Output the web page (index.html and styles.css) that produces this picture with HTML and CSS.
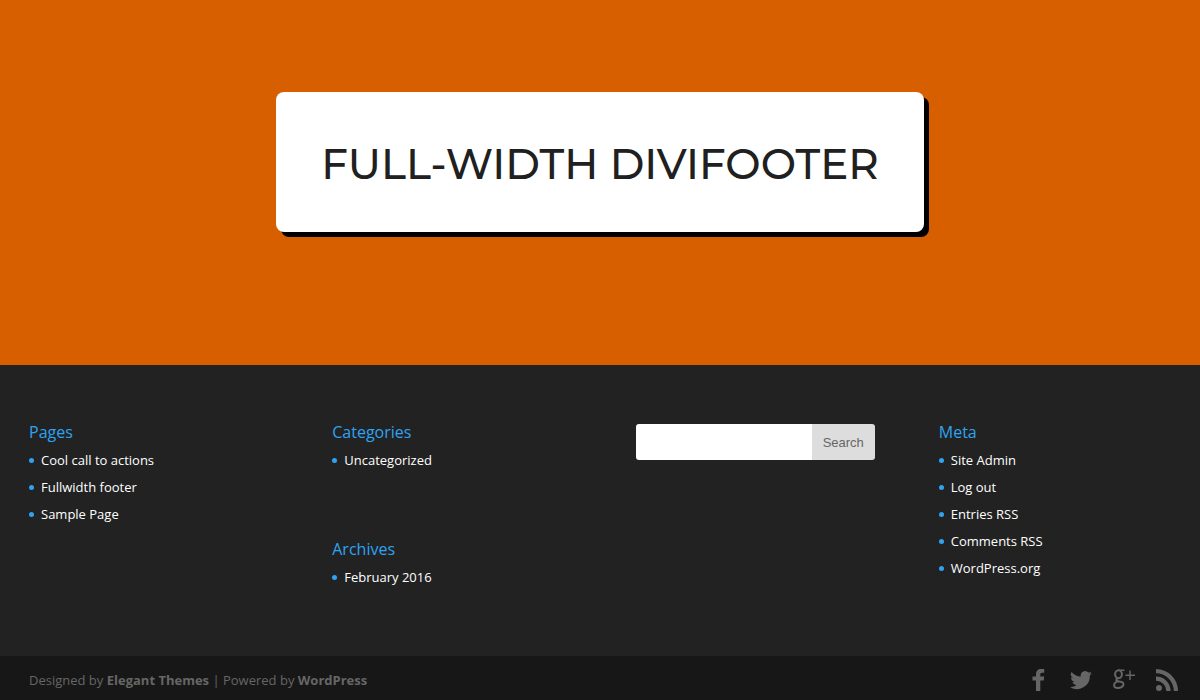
FILE: index.html
```html
<!DOCTYPE html>
<html lang="en">
  <head>
    <meta charset="UTF-8" />
    <meta name="viewport" content="width=device-width, initial-scale=1.0" />
    <title>Full-width Divifooter</title>
    <link rel="stylesheet" href="styles.css">
  </head>
  <body>
    <main class="hero">
      <h1 class="hero-title">FULL-WIDTH DIVIFOOTER</h1>
    </main>
    <footer class="footer">
      <div class="widgets">
        <section class="column">
          <div class="widget">
            <h4>Pages</h4>
            <ul>
              <li><a href="#">Cool call to actions</a></li>
              <li><a href="#">Fullwidth footer</a></li>
              <li><a href="#">Sample Page</a></li>
            </ul>
          </div>
        </section>
        <section class="column">
          <div class="widget">
            <h4>Categories</h4>
            <ul>
              <li><a href="#">Uncategorized</a></li>
            </ul>
          </div>
          <div class="widget">
            <h4>Archives</h4>
            <ul>
              <li><a href="#">February 2016</a></li>
            </ul>
          </div>
        </section>
        <section class="column">
          <form class="search" role="search">
            <input class="search-field" type="text" name="s" aria-label="Search for" />
            <button class="search-button" type="submit">Search</button>
          </form>
        </section>
        <section class="column">
          <div class="widget">
            <h4>Meta</h4>
            <ul>
              <li><a href="#">Site Admin</a></li>
              <li><a href="#">Log out</a></li>
              <li><a href="#">Entries RSS</a></li>
              <li><a href="#">Comments RSS</a></li>
              <li><a href="#">WordPress.org</a></li>
            </ul>
          </div>
        </section>
      </div>

      <div class="bottom">
        <p class="info">Designed by <a href="#">Elegant Themes</a> | Powered by <a href="#">WordPress</a></p>
        <nav class="social">
          <a href="#" aria-label="Facebook">
            <svg viewBox="0 0 22 22"><path d="M9 22V11.500H5.500V7.500H9V5.500C9 2 10.800 0 14.200 0h3v3.800h-2c-1.500 0-1.900.7-1.900 2v1.700h3.900l-.5 4h-3.400V22z" /></svg>
          </a>
          <a href="#" aria-label="Twitter">
            <svg viewBox="0 0 22 22"><path d="M22 4.200c-.8.4-1.700.6-2.600.7.900-.6 1.600-1.400 2-2.500-.9.500-1.800.9-2.900 1.100A4.500 4.500 0 0 0 10.800 7.600C7.100 7.400 3.800 5.600 1.500 2.900A4.500 4.500 0 0 0 2.900 8.900c-.7 0-1.400-.2-2-.6 0 2.200 1.500 4.100 3.600 4.500-.7.200-1.400.2-2 .1.600 1.800 2.200 3.100 4.200 3.100A9 9 0 0 1 0 17.900 12.800 12.800 0 0 0 19.800 6.500c.9-.6 1.600-1.400 2.200-2.300z" /></svg>
          </a>
          <a href="#" aria-label="Google Plus">
            <svg viewBox="0 0 22 22">
              <g class="line">
                <ellipse class="bold" cx="5.500" cy="5.200" rx="3.400" ry="4" />
                <path class="bold" d="M4.500 9.200C2.500 10.800 3 12 6 12.400 9.500 12.800 10.800 13.800 10.300 16 9.300 19.600 2 20 1.200 17 .8 14.800 2.500 13 5 12.400" />
                <path d="M5.500 1.200H11.500M17 1.500v9.500M12.500 6.200H22" />
              </g>
            </svg>
          </a>
          <a href="#" aria-label="RSS">
            <svg viewBox="0 0 22 22"><circle cx="3" cy="19" r="3" /><path d="M0 7.500V11.700A10.300 10.300 0 0 1 10.300 22h4.300A14.500 14.500 0 0 0 0 7.500zM0 0v4.200A17.800 17.800 0 0 1 17.800 22H22A22 22 0 0 0 0 0z" /></svg>
          </a>
        </nav>
      </div>
    </footer>
  </body>
</html>
```
FILE: styles.css
```css
* {
  box-sizing: border-box;
}

body {
  margin: 0;
  min-height: 100vh;
  background-color: #171717;
  font-family: "Open Sans", Arial, sans-serif;
  font-size: 13px;
}

a {
  color: inherit;
  text-decoration: none;
}

ul {
  list-style: none;
  margin: 0;
  padding: 0;
}

/** Hero */

.hero {
  display: flex;
  justify-content: center;
  padding: 92px 0 133px;
  background-color: #d75f00;
}

.hero-title {
  width: 54%;
  min-width: min-content;
  margin: 0;
  padding: 46px 24px 42px;
  border-radius: 8px;
  background-color: #fff;
  box-shadow: 5px 5px 0 #000;
  color: #202020;
  font-family: Montserrat, Inter, sans-serif;
  font-size: 42px;
  font-weight: 500;
  line-height: 52px;
  text-align: center;
}

/** Footer */

.footer {
  background-color: #222;
}

.widgets {
  display: grid;
  grid-template-columns: repeat(4, minmax(0, 1fr));
  gap: 64px;
  padding: 59px 22px 65px 29px;
}

.column {
  display: flex;
  flex-direction: column;
  gap: 67px;
}

.widget h4 {
  margin: 0 0 7px;
  color: #2ea3f2;
  font-size: 16px;
  font-weight: 400;
  line-height: 16px;
}

.widget li {
  display: flex;
  align-items: center;
  gap: 7px;
  margin-bottom: 1px;
  color: #fff;
  line-height: 26px;
}

.widget li::before {
  content: "";
  width: 5px;
  height: 5px;
  border-radius: 50%;
  background-color: #2ea3f2;
}

.search {
  display: flex;
  height: 36px;
  border-radius: 3px;
  overflow: hidden;
}

.search-field {
  flex: 1;
  min-width: 0;
  padding: 0 10px;
  border: 0;
  background-color: #fff;
  font-size: 13px;
}

.search-button {
  width: 63px;
  padding: 0;
  border: 0;
  background-color: #ddd;
  color: #666;
  font-family: "Liberation Sans", Arial, sans-serif;
  font-size: 13px;
  cursor: pointer;
}

.bottom {
  display: flex;
  align-items: center;
  justify-content: space-between;
  height: 44px;
  padding: 4px 22px 0 29px;
  background-color: #171717;
  color: #666;
}

.info {
  margin: 0;
}

.info a {
  font-weight: 700;
}

.social {
  display: flex;
  gap: 21px;
}

.social svg {
  display: block;
  width: 22px;
  height: 22px;
  fill: #666;
}

.social .line {
  fill: none;
  stroke: #666;
  stroke-width: 1.5;
}

.social .bold {
  stroke-width: 2;
}
```
